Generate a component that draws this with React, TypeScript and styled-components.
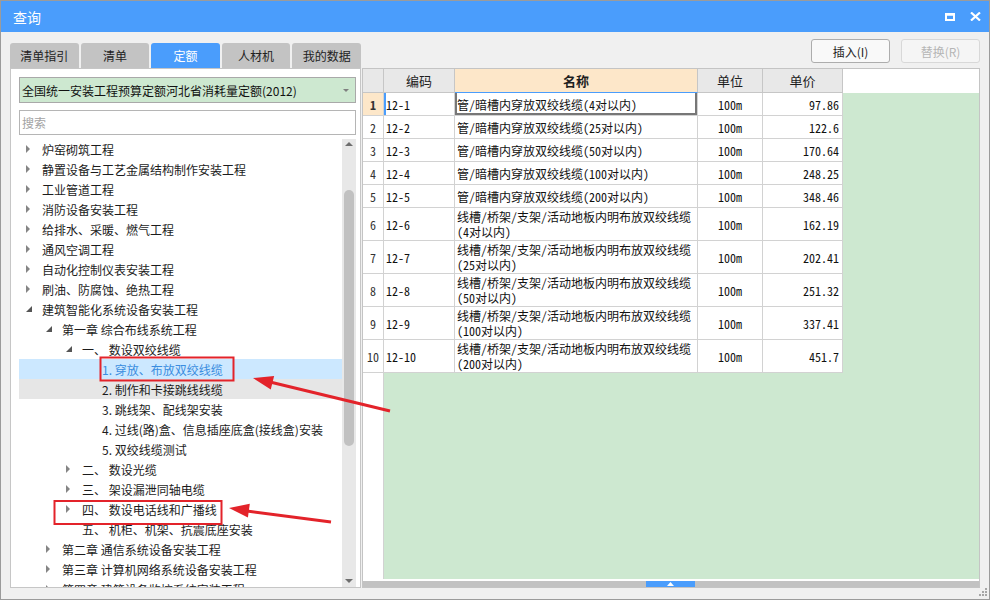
import React from "react";
import styled, { createGlobalStyle } from "styled-components";

const UI_FONT = `"Noto Sans CJK SC", "Liberation Sans", sans-serif`;
const GRID_FONT = `"Noto Sans Mono CJK SC", "Liberation Mono", "Noto Sans CJK SC", monospace`;
const BLUE = "#4a9dfc";
const GREEN = "#cde8d0";
const PEACH = "#fde7c9";

const GlobalStyle = createGlobalStyle`
  * { box-sizing: border-box; }
  html, body { margin: 0; padding: 0; background: #fff; }
  body { font-family: ${UI_FONT}; }
`;

type TreeItem = { level: number; text: string; arrow?: "open" | "closed"; state?: "selected" | "hover" };

const tree: TreeItem[] = [
  { level: 0, text: "炉窑砌筑工程", arrow: "closed" },
  { level: 0, text: "静置设备与工艺金属结构制作安装工程", arrow: "closed" },
  { level: 0, text: "工业管道工程", arrow: "closed" },
  { level: 0, text: "消防设备安装工程", arrow: "closed" },
  { level: 0, text: "给排水、采暖、燃气工程", arrow: "closed" },
  { level: 0, text: "通风空调工程", arrow: "closed" },
  { level: 0, text: "自动化控制仪表安装工程", arrow: "closed" },
  { level: 0, text: "刷油、防腐蚀、绝热工程", arrow: "closed" },
  { level: 0, text: "建筑智能化系统设备安装工程", arrow: "open" },
  { level: 1, text: "第一章 综合布线系统工程", arrow: "open" },
  { level: 2, text: "一、 数设双绞线缆", arrow: "open" },
  { level: 3, text: "1. 穿放、布放双绞线缆", state: "selected" },
  { level: 3, text: "2. 制作和卡接跳线线缆", state: "hover" },
  { level: 3, text: "3. 跳线架、配线架安装" },
  { level: 3, text: "4. 过线(路)盒、信息插座底盒(接线盒)安装" },
  { level: 3, text: "5. 双绞线缆测试" },
  { level: 2, text: "二、 数设光缆", arrow: "closed" },
  { level: 2, text: "三、 架设漏泄同轴电缆", arrow: "closed" },
  { level: 2, text: "四、 数设电话线和广播线", arrow: "closed" },
  { level: 2, text: "五、 机柜、机架、抗震底座安装" },
  { level: 1, text: "第二章 通信系统设备安装工程", arrow: "closed" },
  { level: 1, text: "第三章 计算机网络系统设备安装工程", arrow: "closed" },
  { level: 1, text: "第四章 建筑设备监控系统安装工程", arrow: "closed" },
];

const rows = [
  { code: "12-1", name: "管/暗槽内穿放双绞线缆(4对以内)", price: "97.86" },
  { code: "12-2", name: "管/暗槽内穿放双绞线缆(25对以内)", price: "122.6" },
  { code: "12-3", name: "管/暗槽内穿放双绞线缆(50对以内)", price: "170.64" },
  { code: "12-4", name: "管/暗槽内穿放双绞线缆(100对以内)", price: "248.25" },
  { code: "12-5", name: "管/暗槽内穿放双绞线缆(200对以内)", price: "348.46" },
  { code: "12-6", name: "线槽/桥架/支架/活动地板内明布放双绞线缆\n(4对以内)", price: "162.19" },
  { code: "12-7", name: "线槽/桥架/支架/活动地板内明布放双绞线缆\n(25对以内)", price: "202.41" },
  { code: "12-8", name: "线槽/桥架/支架/活动地板内明布放双绞线缆\n(50对以内)", price: "251.32" },
  { code: "12-9", name: "线槽/桥架/支架/活动地板内明布放双绞线缆\n(100对以内)", price: "337.41" },
  { code: "12-10", name: "线槽/桥架/支架/活动地板内明布放双绞线缆\n(200对以内)", price: "451.7" },
];

const tabs = ["清单指引", "清单", "定额", "人材机", "我的数据"];

const W = { rn: 21, code: 71, name: 243, unit: 65, price: 80 };

const App = () => {
  return (
    <>
      <GlobalStyle />
      <Window>
        <TitleBar>
          <Title>查询</Title>
          <WinButtons>
            <svg width="10" height="8" viewBox="0 0 10 8">
              <rect x="1" y="1.5" width="8" height="5.5" fill="none" stroke="#fff" strokeWidth="2" />
              <rect x="0" y="0" width="10" height="2.5" fill="#fff" />
            </svg>
            <svg width="11" height="9" viewBox="0 0 11 9">
              <path d="M1 0.5 L10 8.5 M10 0.5 L1 8.5" stroke="#fff" strokeWidth="2.2" />
            </svg>
          </WinButtons>
        </TitleBar>

        <Body>
          <LeftCol>
            <Tabs>
              {tabs.map((t) => (
                <Tab key={t} $active={t === "定额"}>
                  {t}
                </Tab>
              ))}
            </Tabs>
            <LeftPanel>
              <Select>
                <span>全国统一安装工程预算定额河北省消耗量定额(2012)</span>
                <SelectArrow />
              </Select>
              <Search placeholder="搜索" />
              <TreeWrap>
                <TreeList>
                  {tree.map((item, i) => (
                    <TreeRow key={i} $level={item.level} $state={item.state}>
                      <ArrowSlot>
                        {item.arrow === "closed" && <Closed />}
                        {item.arrow === "open" && (
                          <svg width="6" height="6" viewBox="0 0 6 6">
                            <polygon points="6,0 6,6 0,6" fill="#555" />
                          </svg>
                        )}
                      </ArrowSlot>
                      <span>{item.text}</span>
                    </TreeRow>
                  ))}
                </TreeList>
                <VScroll>
                  <ScrollArrow $up />
                  <Thumb />
                  <ScrollArrow />
                </VScroll>
              </TreeWrap>
            </LeftPanel>
          </LeftCol>

          <RightCol>
            <Toolbar>
              <Button>插入(I)</Button>
              <Button disabled>替换(R)</Button>
            </Toolbar>
            <Grid>
              <HeaderRow>
                <HeadCell $w={W.rn} />
                <HeadCell $w={W.code}>编码</HeadCell>
                <HeadCell $w={W.name} $current>
                  名称
                </HeadCell>
                <HeadCell $w={W.unit}>单位</HeadCell>
                <HeadCell $w={W.price}>单价</HeadCell>
                <HeadFiller />
              </HeaderRow>
              <GridBody>
                <Gutter>
                  {rows.map((r, i) => (
                    <RowNum key={r.code} $tall={r.name.includes("\n")} $current={i === 0}>
                      {i + 1}
                    </RowNum>
                  ))}
                </Gutter>
                <DataArea>
                  {rows.map((r, i) => {
                    const tall = r.name.includes("\n");
                    return (
                      <DataRow key={r.code} $tall={tall}>
                        <CodeCell $focus={i === 0}>{r.code}</CodeCell>
                        <NameCell $current={i === 0}>{r.name}</NameCell>
                        <UnitCell>100m</UnitCell>
                        <PriceCell>{r.price}</PriceCell>
                      </DataRow>
                    );
                  })}
                </DataArea>
              </GridBody>
              <HScroll>
                <Splitter>
                  <svg width="7" height="4" viewBox="0 0 7 4">
                    <polygon points="3.5,0 7,4 0,4" fill="#fff" />
                  </svg>
                </Splitter>
              </HScroll>
            </Grid>
          </RightCol>
        </Body>

        <Grip width="10" height="9" viewBox="0 0 10 9">
          {[
            [7, 0],
            [4, 3],
            [7, 3],
            [1, 6],
            [4, 6],
            [7, 6],
          ].map(([x, y]) => (
            <rect key={`${x}-${y}`} x={x} y={y} width="2" height="2" fill="#a6a6a6" />
          ))}
        </Grip>

        <Annotations width="990" height="600" viewBox="0 0 990 600">
          <rect x="100.5" y="357.5" width="133" height="23" fill="none" stroke="#e3232a" strokeWidth="2" />
          <rect x="54.5" y="501" width="167" height="23" fill="none" stroke="#e3232a" strokeWidth="2" />
          <line x1="390" y1="411" x2="270" y2="382" stroke="#e3232a" strokeWidth="3" />
          <polygon points="253,378 274.1,375.9 270.8,389.5" fill="#e3232a" />
          <line x1="331" y1="522" x2="247" y2="511" stroke="#e3232a" strokeWidth="3" />
          <polygon points="229,508 249.8,503.8 247.9,517.6" fill="#e3232a" />
        </Annotations>
      </Window>
    </>
  );
};

export default App;

const Window = styled.div`
  position: relative;
  width: 990px;
  height: 600px;
  border: 1px solid #9b9b9b;
  background: #f0f0f0;
  display: flex;
  flex-direction: column;
  overflow: hidden;
`;

const TitleBar = styled.div`
  height: 31px;
  flex-shrink: 0;
  background: ${BLUE};
  color: #fff;
  display: flex;
  align-items: center;
  justify-content: space-between;
  padding: 0 8px 0 12px;
`;

const Title = styled.div`
  font-size: 14px;
`;

const WinButtons = styled.div`
  display: flex;
  align-items: center;
  gap: 15px;
  svg {
    display: block;
  }
`;

const Body = styled.div`
  flex: 1;
  min-height: 0;
  display: flex;
  gap: 1px;
  padding: 0 9px 11px 9px;
`;

const LeftCol = styled.div`
  width: 351px;
  display: flex;
  flex-direction: column;
  padding-top: 11px;
`;

const Tabs = styled.div`
  display: flex;
  gap: 2px;
  height: 25px;
  flex-shrink: 0;
`;

const Tab = styled.div<{ $active?: boolean }>`
  width: 78px;
  height: 25px;
  border-radius: 3px 3px 0 0;
  background: ${({ $active }) => ($active ? BLUE : "#c3c3c3")};
  color: ${({ $active }) => ($active ? "#fff" : "#222")};
  font-size: 12px;
  display: flex;
  align-items: center;
  justify-content: center;
`;

const LeftPanel = styled.div`
  flex: 1;
  min-height: 0;
  background: #fff;
  border: 1px solid #c6c6c6;
  display: flex;
  flex-direction: column;
  padding: 8px 4px 0 8px;
`;

const Select = styled.div`
  height: 26px;
  flex-shrink: 0;
  background: ${GREEN};
  border: 1px solid #a9a9a9;
  display: flex;
  align-items: center;
  justify-content: space-between;
  padding: 0 6px 0 2px;
  font-size: 12px;
  color: #111;
`;

const SelectArrow = styled.span`
  width: 0;
  height: 0;
  border-left: 3px solid transparent;
  border-right: 3px solid transparent;
  border-top: 3px solid #808080;
`;

const Search = styled.input`
  height: 25px;
  flex-shrink: 0;
  margin-top: 7px;
  border: 1px solid #b5b5b5;
  outline: none;
  padding: 0 2px;
  font-family: ${UI_FONT};
  font-size: 12px;
  &::placeholder {
    color: #a3a3a3;
  }
`;

const TreeWrap = styled.div`
  flex: 1;
  min-height: 0;
  margin-top: 4px;
  display: flex;
  overflow: hidden;
`;

const TreeList = styled.div`
  flex: 1;
  overflow: hidden;
`;

const TreeRow = styled.div<{ $level: number; $state?: "selected" | "hover" }>`
  height: 20px;
  display: flex;
  align-items: center;
  padding-left: ${({ $level }) => 4 + $level * 20}px;
  font-size: 12px;
  white-space: nowrap;
  color: ${({ $state }) => ($state === "selected" ? "#3a8de0" : "#1c1c1c")};
  background: ${({ $state }) =>
    $state === "selected" ? "#cce8ff" : $state === "hover" ? "#e6e6e6" : "transparent"};
`;

const ArrowSlot = styled.span`
  width: 19px;
  height: 20px;
  flex-shrink: 0;
  display: flex;
  align-items: center;
  padding-left: 3px;
  svg {
    display: block;
  }
`;

const Closed = styled.span`
  width: 0;
  height: 0;
  border-top: 4px solid transparent;
  border-bottom: 4px solid transparent;
  border-left: 4px solid #858585;
`;

const VScroll = styled.div`
  width: 14px;
  flex-shrink: 0;
  background: #e8e8e8;
  display: flex;
  flex-direction: column;
  align-items: center;
  padding: 3px 0 4px;
`;

const ScrollArrow = styled.span<{ $up?: boolean }>`
  width: 0;
  height: 0;
  border-left: 4px solid transparent;
  border-right: 4px solid transparent;
  ${({ $up }) => ($up ? "border-bottom: 4px solid #6e6e6e;" : "border-top: 4px solid #6e6e6e; margin-top: auto;")}
`;

const Thumb = styled.div`
  width: 10px;
  height: 256px;
  margin-top: 44px;
  border-radius: 5px;
  background: #c1c1c1;
`;

const RightCol = styled.div`
  flex: 1;
  min-width: 0;
  display: flex;
  flex-direction: column;
`;

const Toolbar = styled.div`
  height: 24px;
  margin: 7px 0 5px;
  flex-shrink: 0;
  display: flex;
  justify-content: flex-end;
  gap: 11px;
`;

const Button = styled.button`
  width: 79px;
  height: 24px;
  border: 1px solid ${({ disabled }) => (disabled ? "#d8d8d8" : "#adadad")};
  border-radius: 3px;
  background: ${({ disabled }) => (disabled ? "#f5f5f5" : "#f9f9f9")};
  color: ${({ disabled }) => (disabled ? "#b5b5b5" : "#1e1e1e")};
  font-family: ${UI_FONT};
  font-size: 12px;
  padding: 0;
`;

const Grid = styled.div`
  flex: 1;
  min-height: 0;
  background: #fff;
  border: 1px solid #c4c4c4;
  display: flex;
  flex-direction: column;
  overflow: hidden;
`;

const HeaderRow = styled.div`
  height: 24px;
  flex-shrink: 0;
  display: flex;
`;

const HeadCell = styled.div<{ $w: number; $current?: boolean }>`
  width: ${({ $w }) => $w}px;
  flex-shrink: 0;
  height: 24px;
  display: flex;
  align-items: center;
  justify-content: center;
  font-size: 13px;
  color: #1e1e1e;
  font-weight: ${({ $current }) => ($current ? 700 : 400)};
  background: ${({ $current }) => ($current ? PEACH : "#e8e8e8")};
  border-right: 1px solid #c6c6c6;
  border-bottom: 1px solid ${({ $current }) => ($current ? BLUE : "#c6c6c6")};
`;

const HeadFiller = styled.div`
  flex: 1;
  background: #fff;
`;

const GridBody = styled.div`
  flex: 1;
  min-height: 0;
  display: flex;
`;

const Gutter = styled.div`
  width: ${W.rn}px;
  flex-shrink: 0;
  background: #fff;
  border-right: 1px solid #d2d2d2;
  display: flex;
  flex-direction: column;
`;

const RowNum = styled.div<{ $tall?: boolean; $current?: boolean }>`
  height: ${({ $tall }) => ($tall ? 33 : 23)}px;
  flex-shrink: 0;
  display: flex;
  align-items: center;
  justify-content: center;
  font-family: ${GRID_FONT};
  font-size: 12px;
  color: #333;
  font-weight: ${({ $current }) => ($current ? 700 : 400)};
  background: ${({ $current }) => ($current ? PEACH : "#fff")};
  border-bottom: 1px solid #d2d2d2;
`;

const DataArea = styled.div`
  flex: 1;
  background: ${GREEN};
  display: flex;
  flex-direction: column;
`;

const DataRow = styled.div<{ $tall?: boolean }>`
  height: ${({ $tall }) => ($tall ? 33 : 23)}px;
  flex-shrink: 0;
  display: flex;
  width: fit-content;
  background: #fff;
  font-family: ${GRID_FONT};
  font-size: 12px;
  color: #111;
  & > div {
    height: 100%;
    display: flex;
    align-items: center;
    border-right: 1px solid #d2d2d2;
    border-bottom: 1px solid #d2d2d2;
  }
`;

const CodeCell = styled.div<{ $focus?: boolean }>`
  width: ${W.code}px;
  padding-left: 2px;
  box-shadow: ${({ $focus }) => ($focus ? `inset 2px 0 ${BLUE}` : "none")};
`;

const NameCell = styled.div<{ $current?: boolean }>`
  width: ${W.name}px;
  padding-left: 2px;
  white-space: pre-line;
  line-height: 15px;
  box-shadow: ${({ $current }) =>
    $current ? "inset 2px 0 #777, inset -2px 0 #777, inset 0 -2px #777" : "none"};
`;

const UnitCell = styled.div`
  width: ${W.unit}px;
  justify-content: center;
`;

const PriceCell = styled.div`
  width: ${W.price}px;
  justify-content: flex-end;
  padding-right: 3px;
`;

const HScroll = styled.div`
  height: 6px;
  margin-top: 2px;
  flex-shrink: 0;
  background: #c2c2c2;
  display: flex;
`;

const Splitter = styled.div`
  width: 49px;
  margin-left: 283px;
  background: ${BLUE};
  display: flex;
  align-items: flex-end;
  justify-content: center;
  svg {
    display: block;
    margin-bottom: 1px;
  }
`;

const Grip = styled.svg`
  position: absolute;
  right: 1px;
  bottom: 2px;
`;

const Annotations = styled.svg`
  position: absolute;
  left: -1px;
  top: -1px;
  pointer-events: none;
`;
